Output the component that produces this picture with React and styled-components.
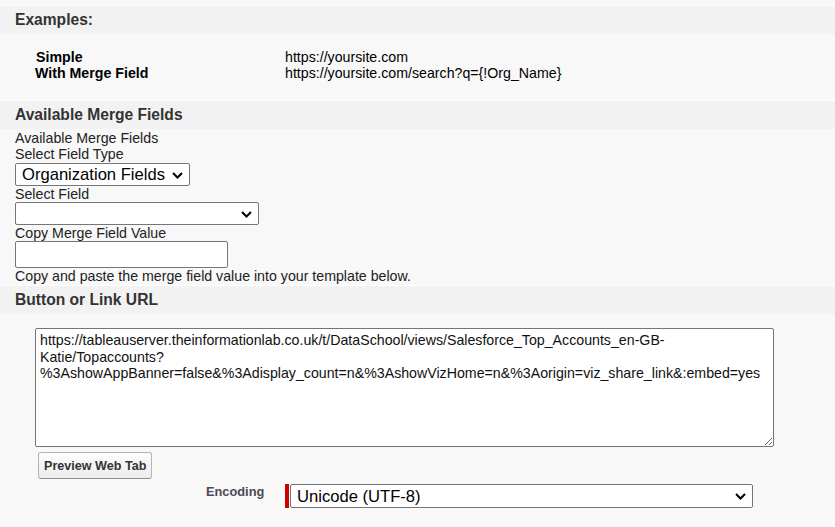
import React, { useState } from 'react'
import styled, { createGlobalStyle } from 'styled-components'

const GlobalStyle = createGlobalStyle`
  html, body {
    margin: 0;
    padding: 0;
    background: #f8f8f8;
    font-family: "Liberation Sans", Arial, sans-serif;
    color: #000;
  }
`

const Page = styled.div`
  padding-top: 5px;
  min-height: 522px;
  background: #f8f8f8;
`

const SectionHeader = styled.div`
  border-top: 1px solid #fff;
  height: 28px;
  background: #f2f2f2;
  display: flex;
  align-items: center;
  padding-left: 15px;
  font-weight: bold;
  font-size: 15.6px;
  color: #333;
`

const Examples = styled.div`
  display: grid;
  grid-template-columns: 250px 1fr;
  padding: 15px 0 19px 35px;
  font-size: 14.2px;
  line-height: 16px;
`

const ExampleName = styled.div`
  font-weight: bold;
  padding-left: ${p => (p.$indent ? '1px' : '0')};
`

const MergeBody = styled.div`
  display: flex;
  flex-direction: column;
  align-items: flex-start;
  padding: 1px 0 1px 15px;
  font-size: 14.2px;
  line-height: 16px;
  color: #222;
`

const SelectWrap = styled.div`
  position: relative;
  display: inline-flex;
  margin-top: ${p => p.$mt || 0}px;
`

const Select = styled.select`
  appearance: none;
  -webkit-appearance: none;
  box-sizing: border-box;
  font-family: "Liberation Sans", Arial, sans-serif;
  font-size: 16.6px;
  color: #000;
  background: #fff;
  border: 1px solid #767676;
  border-radius: 2px;
  height: ${p => p.$h || 23}px;
  width: ${p => (p.$w ? `${p.$w}px` : 'auto')};
  margin: 0;
  padding: 2px 24px 0 6px;
  line-height: 1;
`

const Chevron = styled.svg`
  position: absolute;
  right: 7px;
  top: 50%;
  width: 11px;
  height: 7px;
  margin-top: -3px;
  pointer-events: none;
`

const TextInput = styled.input`
  box-sizing: border-box;
  width: 213px;
  height: 27px;
  border: 1px solid #767676;
  border-radius: 2px;
  background: #fff;
  margin: 0;
`

const UrlBody = styled.div`
  padding: 14px 0 0 35px;
  display: flex;
  flex-direction: column;
  align-items: flex-start;
`

const UrlArea = styled.textarea`
  box-sizing: border-box;
  width: 739px;
  height: 119px;
  border: 1px solid #767676;
  border-radius: 2px;
  background: #fff;
  margin: 0;
  padding: 3px 4px;
  font-family: "Liberation Sans", Arial, sans-serif;
  font-size: 14.2px;
  line-height: 16.5px;
  color: #111;
`

const Button = styled.button`
  margin: 5px 0 0 3px;
  height: 27px;
  padding: 0 5px;
  border: 1px solid #b5b5b5;
  border-bottom-color: #8f8f8f;
  border-radius: 3px;
  background: linear-gradient(#fdfdfd, #ececec);
  font-family: "Liberation Sans", Arial, sans-serif;
  font-weight: bold;
  font-size: 12.6px;
  color: #333;
`

const FieldRow = styled.div`
  display: flex;
  align-items: flex-start;
  margin-top: 5px;
  padding-left: 206px;
`

const FieldLabel = styled.label`
  width: 79px;
  font-weight: bold;
  font-size: 12.8px;
  color: #4a4a56;
`

const Required = styled.div`
  display: flex;
  gap: 1px;
  &::before {
    content: '';
    width: 4px;
    background: #c00;
  }
`

const DropDown = ({ mt, children, ...props }) => (
  <SelectWrap $mt={mt}>
    <Select {...props}>{children}</Select>
    <Chevron viewBox="0 0 11 7">
      <path d="M1 1 L5.5 5.5 L10 1" fill="none" stroke="#000" strokeWidth="2" />
    </Chevron>
  </SelectWrap>
)

const url =
  'https://tableauserver.theinformationlab.co.uk/t/DataSchool/views/Salesforce_Top_Accounts_en-GB-Katie/Topaccounts?%3AshowAppBanner=false&%3Adisplay_count=n&%3AshowVizHome=n&%3Aorigin=viz_share_link&:embed=yes'

const App = () => {
  const [value, setValue] = useState(url)

  return (
    <Page>
      <GlobalStyle />
      <SectionHeader>Examples:</SectionHeader>
      <Examples>
        <ExampleName $indent>Simple</ExampleName>
        <div>https://yoursite.com</div>
        <ExampleName>With Merge Field</ExampleName>
        <div>https://yoursite.com/search?q={'{!Org_Name}'}</div>
      </Examples>

      <SectionHeader>Available Merge Fields</SectionHeader>
      <MergeBody>
        <div>Available Merge Fields</div>
        <div>Select Field Type</div>
        <DropDown mt={1} defaultValue="org">
          <option value="org">Organization Fields</option>
          <option value="user">User Fields</option>
        </DropDown>
        <div>Select Field</div>
        <DropDown $w={244} defaultValue="">
          <option value=""></option>
        </DropDown>
        <div>Copy Merge Field Value</div>
        <TextInput type="text" />
        <div>Copy and paste the merge field value into your template below.</div>
      </MergeBody>

      <SectionHeader>Button or Link URL</SectionHeader>
      <UrlBody>
        <UrlArea value={value} onChange={e => setValue(e.target.value)} />
        <Button>Preview Web Tab</Button>
      </UrlBody>
      <FieldRow>
        <FieldLabel>Encoding</FieldLabel>
        <Required>
          <DropDown $w={463} $h={24} defaultValue="utf8">
            <option value="utf8">Unicode (UTF-8)</option>
            <option value="iso">General US &amp; Western Europe (ISO-8859-1)</option>
          </DropDown>
        </Required>
      </FieldRow>
    </Page>
  )
}

export default App
